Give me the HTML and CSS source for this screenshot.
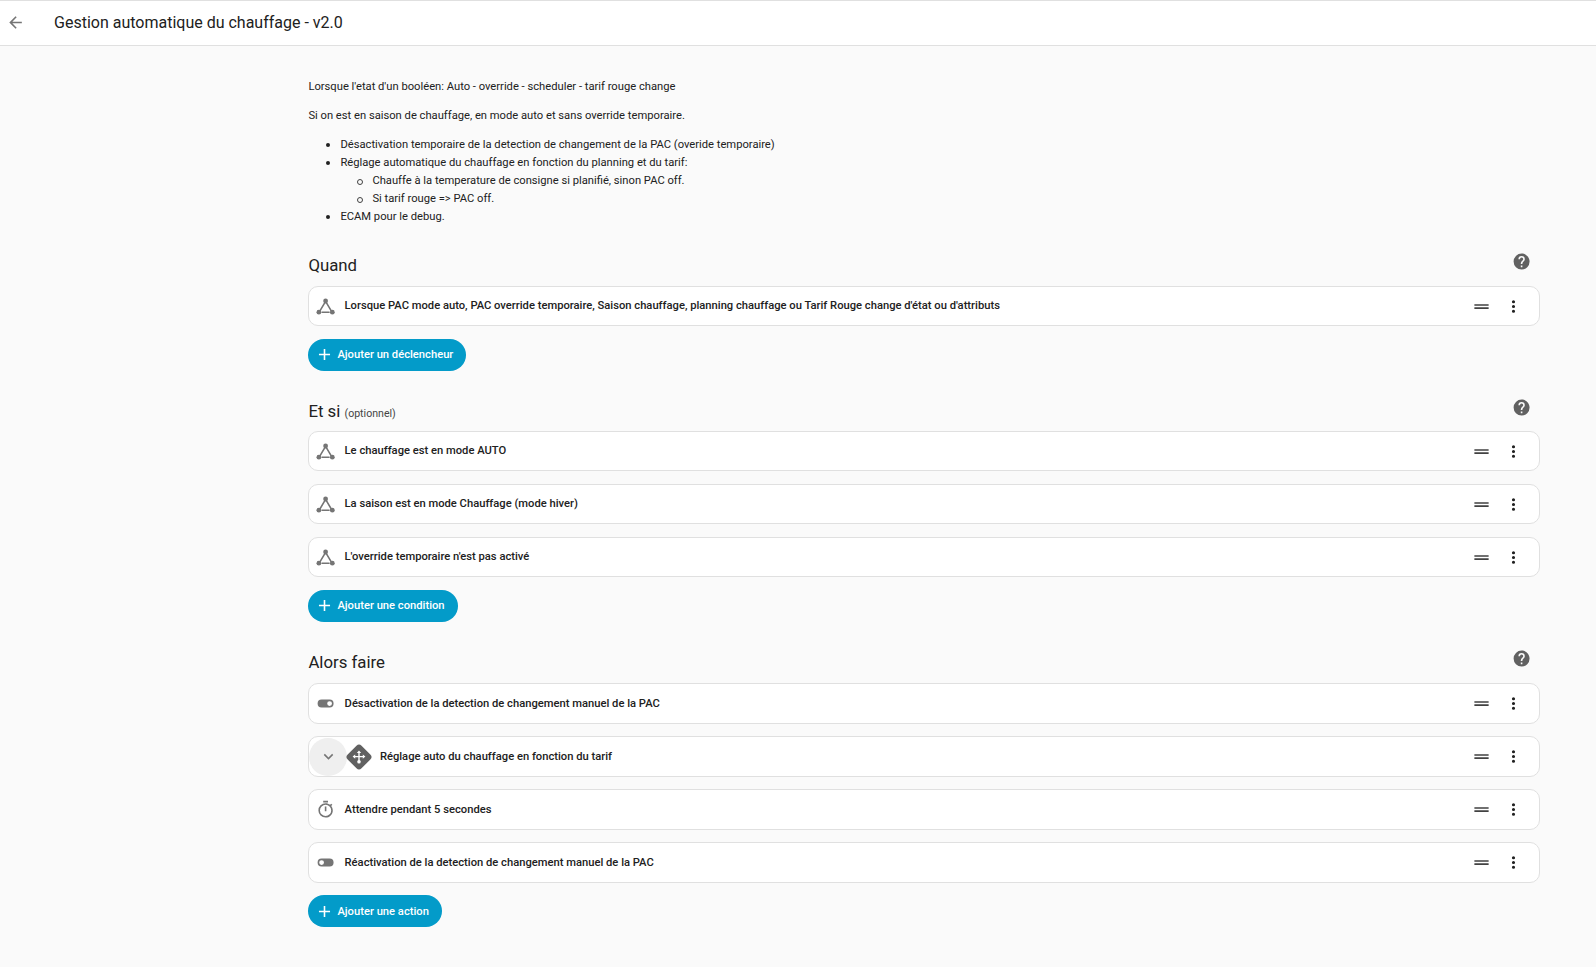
FILE: index.html
```html
<!DOCTYPE html>
<html lang="fr">
<head>
<meta charset="utf-8">
<title>Gestion automatique du chauffage - v2.0</title>
<link rel="stylesheet" href="styles.css">
</head>
<body>
<svg class="defs" width="0" height="0" aria-hidden="true">
  <defs>
    <symbol id="i-state" viewBox="0 0 24 24">
      <path class="sm-line" d="M12 5.5 4 19M12 5.5l8 13.5"/>
      <path d="M7 18h10v2H7z"/>
      <circle cx="12" cy="5" r="3"/><circle cx="3.6" cy="19" r="3"/><circle cx="20.4" cy="19" r="3"/>
    </symbol>
    <symbol id="i-help" viewBox="0 0 24 24"><path d="M15.07,11.25L14.17,12.17C13.45,12.89 13,13.5 13,15H11V14.5C11,13.39 11.45,12.39 12.17,11.67L13.41,10.41C13.78,10.05 14,9.55 14,9C14,7.89 13.1,7 12,7A2,2 0 0,0 10,9H8A4,4 0 0,1 12,5A4,4 0 0,1 16,9C16,9.88 15.64,10.67 15.07,11.25M13,19H11V17H13M12,2A10,10 0 0,0 2,12A10,10 0 0,0 12,22A10,10 0 0,0 22,12C22,6.47 17.5,2 12,2Z"/></symbol>
    <symbol id="i-dots" viewBox="0 0 24 24"><path d="M12,16A2,2 0 0,1 14,18A2,2 0 0,1 12,20A2,2 0 0,1 10,18A2,2 0 0,1 12,16M12,10A2,2 0 0,1 14,12A2,2 0 0,1 12,14A2,2 0 0,1 10,12A2,2 0 0,1 12,10M12,4A2,2 0 0,1 14,6A2,2 0 0,1 12,8A2,2 0 0,1 10,6A2,2 0 0,1 12,4Z"/></symbol>
    <symbol id="i-drag" viewBox="0 0 24 24"><path d="M21 11H3V9H21V11M21 13H3V15H21V13Z"/></symbol>
    <symbol id="i-plus" viewBox="0 0 24 24"><path d="M19,13H13V19H11V13H5V11H11V5H13V11H19V13Z"/></symbol>
    <symbol id="i-on" viewBox="0 0 24 24"><path d="M17,7H7A5,5 0 0,0 2,12A5,5 0 0,0 7,17H17A5,5 0 0,0 22,12A5,5 0 0,0 17,7M17,15A3,3 0 0,1 14,12A3,3 0 0,1 17,9A3,3 0 0,1 20,12A3,3 0 0,1 17,15Z"/></symbol>
    <symbol id="i-off" viewBox="0 0 24 24"><path d="M17,7H7A5,5 0 0,0 2,12A5,5 0 0,0 7,17H17A5,5 0 0,0 22,12A5,5 0 0,0 17,7M7,15A3,3 0 0,1 4,12A3,3 0 0,1 7,9A3,3 0 0,1 10,12A3,3 0 0,1 7,15Z"/></symbol>
    <symbol id="i-timer" viewBox="0 0 24 24"><path d="M12,20A7,7 0 0,1 5,13A7,7 0 0,1 12,6A7,7 0 0,1 19,13A7,7 0 0,1 12,20M19.03,7.39L20.45,5.97C20,5.46 19.55,5 19.04,4.56L17.62,6C16.07,4.74 14.12,4 12,4A9,9 0 0,0 3,13A9,9 0 0,0 12,22C17,22 21,17.97 21,13C21,10.88 20.26,8.93 19.03,7.39M11,14H13V8H11M15,1H9V3H15V1Z"/></symbol>
  </defs>
</svg>
<header class="topbar">
  <svg class="back" viewBox="0 0 24 24"><path d="M20,11V13H8L13.5,18.5L12.08,19.92L4.16,12L12.08,4.08L13.5,5.5L8,11H20Z"/></svg>
  <h1 class="title">Gestion automatique du chauffage - v2.0</h1>
</header>
<main class="content">
  <div class="description">
    <p>Lorsque l'etat d'un booléen: Auto - override - scheduler - tarif rouge change</p>
    <p>Si on est en saison de chauffage, en mode auto et sans override temporaire.</p>
    <ul>
      <li>Désactivation temporaire de la detection de changement de la PAC (overide temporaire)</li>
      <li>Réglage automatique du chauffage en fonction du planning et du tarif:
        <ul>
          <li>Chauffe à la temperature de consigne si planifié, sinon PAC off.</li>
          <li>Si tarif rouge =&gt; PAC off.</li>
        </ul>
      </li>
      <li>ECAM pour le debug.</li>
    </ul>
  </div>

  <section class="section section-when">
    <div class="section-head">
      <h2>Quand</h2>
      <svg class="help"><use href="#i-help"/></svg>
    </div>
    <div class="row">
      <svg class="row-icon"><use href="#i-state"/></svg>
      <span class="row-text">Lorsque PAC mode auto, PAC override temporaire, Saison chauffage, planning chauffage ou Tarif Rouge change d'état ou d'attributs</span>
      <svg class="drag"><use href="#i-drag"/></svg>
      <svg class="dots"><use href="#i-dots"/></svg>
    </div>
    <button class="add"><svg><use href="#i-plus"/></svg>Ajouter un déclencheur</button>
  </section>

  <section class="section section-if">
    <div class="section-head">
      <h2>Et si <small>(optionnel)</small></h2>
      <svg class="help"><use href="#i-help"/></svg>
    </div>
    <div class="row">
      <svg class="row-icon"><use href="#i-state"/></svg>
      <span class="row-text">Le chauffage est en mode AUTO</span>
      <svg class="drag"><use href="#i-drag"/></svg>
      <svg class="dots"><use href="#i-dots"/></svg>
    </div>
    <div class="row">
      <svg class="row-icon"><use href="#i-state"/></svg>
      <span class="row-text">La saison est en mode Chauffage (mode hiver)</span>
      <svg class="drag"><use href="#i-drag"/></svg>
      <svg class="dots"><use href="#i-dots"/></svg>
    </div>
    <div class="row">
      <svg class="row-icon"><use href="#i-state"/></svg>
      <span class="row-text">L'override temporaire n'est pas activé</span>
      <svg class="drag"><use href="#i-drag"/></svg>
      <svg class="dots"><use href="#i-dots"/></svg>
    </div>
    <button class="add"><svg><use href="#i-plus"/></svg>Ajouter une condition</button>
  </section>

  <section class="section section-then">
    <div class="section-head">
      <h2>Alors faire</h2>
      <svg class="help"><use href="#i-help"/></svg>
    </div>
    <div class="row">
      <svg class="row-icon"><use href="#i-on"/></svg>
      <span class="row-text">Désactivation de la detection de changement manuel de la PAC</span>
      <svg class="drag"><use href="#i-drag"/></svg>
      <svg class="dots"><use href="#i-dots"/></svg>
    </div>
    <div class="row row-choose">
      <span class="expand"><svg viewBox="0 0 24 24"><path d="M7.41,8.58L12,13.17L16.59,8.58L18,10L12,16L6,10L7.41,8.58Z"/></svg></span>
      <svg class="diamond" viewBox="0 0 28 28">
        <rect class="diamond-bg" x="4.2" y="4.2" width="19.6" height="19.6" rx="3.6" transform="rotate(45 14 14)"/>
        <path class="diamond-arrows" d="M14 9.5v9M10 13.6h8"/>
        <path class="diamond-heads" d="M14 7.5l2.2 2.6h-4.4zM7.6 13.6l2.6-2.2v4.4zM20.4 13.6l-2.6-2.2v4.4z"/>
        <circle class="diamond-heads" cx="14" cy="18.8" r="1.8"/>
      </svg>
      <span class="row-text">Réglage auto du chauffage en fonction du tarif</span>
      <svg class="drag"><use href="#i-drag"/></svg>
      <svg class="dots"><use href="#i-dots"/></svg>
    </div>
    <div class="row">
      <svg class="row-icon"><use href="#i-timer"/></svg>
      <span class="row-text">Attendre pendant 5 secondes</span>
      <svg class="drag"><use href="#i-drag"/></svg>
      <svg class="dots"><use href="#i-dots"/></svg>
    </div>
    <div class="row">
      <svg class="row-icon"><use href="#i-off"/></svg>
      <span class="row-text">Réactivation de la detection de changement manuel de la PAC</span>
      <svg class="drag"><use href="#i-drag"/></svg>
      <svg class="dots"><use href="#i-dots"/></svg>
    </div>
    <button class="add"><svg><use href="#i-plus"/></svg>Ajouter une action</button>
  </section>
</main>
</body>
</html>
```

FILE: styles.css
```css
* { box-sizing: border-box; }
html, body { margin: 0; padding: 0; }
body {
  background: #fafafa;
  color: #212121;
  font-family: Roboto, "Liberation Sans", sans-serif;
  font-size: 11.2px;
  height: 967px;
  overflow: hidden;
}
.defs { position: absolute; }

.topbar {
  display: flex;
  align-items: center;
  height: 46px;
  background: #fff;
  border-top: 1px solid #e0e0e0;
  border-bottom: 1px solid #e0e0e0;
  padding: 0 0 2px 6px;
}
.back { width: 19px; height: 19px; fill: #757575; }
.title {
  margin: 0 0 0 29px;
  font-size: 16px;
  font-weight: 400;
  color: #212121;
}

.content {
  width: 1232px;
  margin-left: 308.4px;
}

.description { padding-top: 32px; line-height: 18px; }
.description p { margin: 0 0 11px; }
.description ul { margin: 0; padding-left: 32px; list-style: none; }
.description li { position: relative; }
.description li::before {
  content: "";
  position: absolute;
  left: -14.5px;
  top: 7px;
  width: 4.4px;
  height: 4.4px;
  border-radius: 50%;
  background: #212121;
}
.description ul ul > li::before {
  left: -15.5px;
  top: 6.6px;
  width: 4px;
  height: 4px;
  background: transparent;
  border: 1px solid #424242;
}

.section-head {
  display: flex;
  justify-content: space-between;
  height: 32px;
}
.section-when .section-head,
.section-then .section-head { height: 33px; }
.section-head h2 {
  margin: 0;
  font-size: 16.8px;
  font-weight: 400;
  line-height: 24px;
  color: #212121;
}
.section-head small { font-size: 10.6px; color: #444; }
.help { width: 19.2px; height: 19.2px; fill: #616161; margin: -1px 9.5px 0 0; }

.section-when { margin-top: 27px; }
.section-if { margin-top: 28px; }
.section-then { margin-top: 28.5px; }

.row {
  display: flex;
  align-items: center;
  height: 40.4px;
  background: #fff;
  border: 1px solid #e0e0e0;
  border-radius: 10px;
  padding: 0 16px 0 7px;
  margin-bottom: 12.6px;
}
.row-icon { width: 19.2px; height: 19.2px; fill: #757575; margin-right: 9px; flex: none; }
.sm-line { stroke: #757575; stroke-width: 2; fill: none; }
.row-text { flex: 1; font-weight: 500; color: #212121; padding-bottom: 1px; }
.drag { width: 19px; height: 19px; fill: #424242; margin-right: 13px; }
.dots { width: 19px; height: 19px; fill: #212121; }

.row-choose { padding-left: 0; }
.expand {
  display: flex;
  align-items: center;
  justify-content: center;
  width: 38px;
  height: 38px;
  border-radius: 50%;
  background: #efefef;
  flex: none;
}
.expand svg { width: 19px; height: 19px; fill: #757575; }
.diamond { width: 28px; height: 28px; margin: 0 6.5px 0 -2px; flex: none; }
.diamond-bg { fill: #616161; }
.diamond-arrows { stroke: #fff; stroke-width: 1.4; fill: none; }
.diamond-heads { fill: #fff; }

.add {
  display: flex;
  align-items: center;
  height: 32px;
  margin-top: 1px;
  border: 0;
  border-radius: 16px;
  background: #039bc9;
  color: #fff;
  font-family: inherit;
  font-size: 11.2px;
  font-weight: 500;
  padding: 0 13px 0 7px;
}
.add svg { width: 19px; height: 19px; fill: #fff; margin-right: 3px; }
```
